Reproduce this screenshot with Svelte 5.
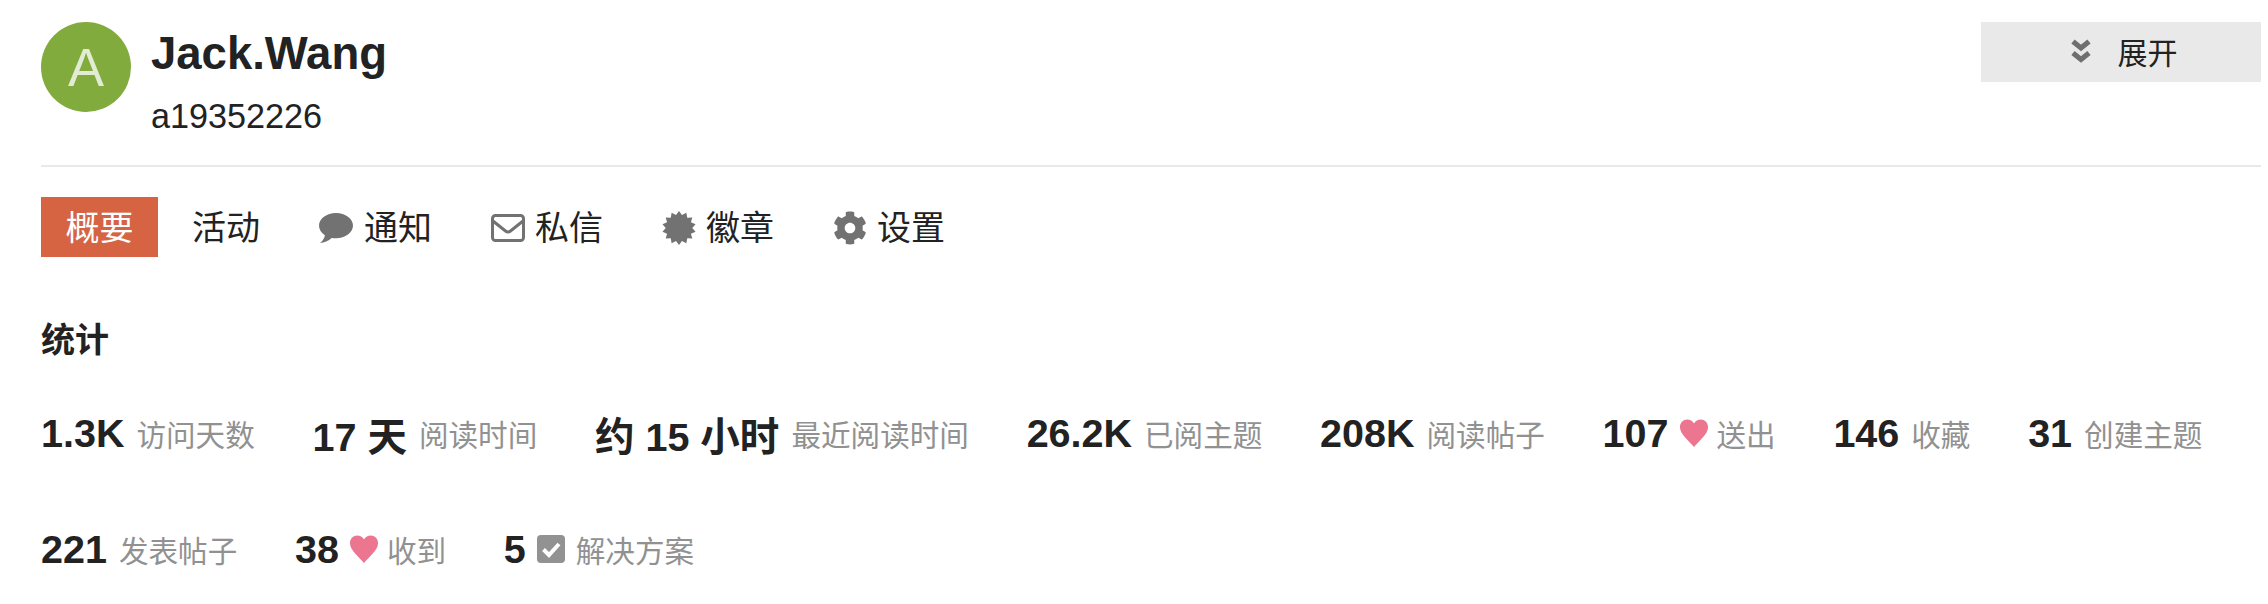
<script>
	// burst outline for the badge icon
	const burst = Array.from({ length: 28 }, (_, i) => {
		const r = i % 2 ? 39 : 50;
		const a = (i * Math.PI) / 14;
		return `${(50 + r * Math.sin(a)).toFixed(1)},${(50 - r * Math.cos(a)).toFixed(1)}`;
	}).join(' ');

	const gearPath =
		'M487.4 315.7l-42.6-24.6c4.3-23.2 4.3-47 0-70.2l42.6-24.6c4.9-2.8 7.1-8.6 5.5-14-11.1-35.6-30-67.8-54.7-94.6-3.8-4.1-10-5.1-14.8-2.3L380.8 110c-17.9-15.4-38.5-27.3-60.8-35.1V25.8c0-5.6-3.9-10.5-9.4-11.7-36.7-8.2-74.3-7.8-109.2 0-5.5 1.2-9.4 6.1-9.4 11.7V75c-22.2 7.9-42.8 19.8-60.8 35.1L88.7 85.5c-4.9-2.8-11-1.9-14.8 2.3-24.7 26.7-43.6 58.9-54.7 94.6-1.7 5.4.6 11.2 5.5 14L67.3 221c-4.3 23.2-4.3 47 0 70.2l-42.6 24.6c-4.9 2.8-7.1 8.6-5.5 14 11.1 35.6 30 67.8 54.7 94.6 3.8 4.1 10 5.1 14.8 2.3l42.6-24.6c17.9 15.4 38.5 27.3 60.8 35.1v49.2c0 5.6 3.9 10.5 9.4 11.7 36.7 8.2 74.3 7.8 109.2 0 5.5-1.2 9.4-6.1 9.4-11.7v-49.2c22.2-7.9 42.8-19.8 60.8-35.1l42.6 24.6c4.9 2.8 11 1.9 14.8-2.3 24.7-26.7 43.6-58.9 54.7-94.6 1.5-5.5-.7-11.3-5.6-14.1zM256 336c-44.1 0-80-35.9-80-80s35.9-80 80-80 80 35.9 80 80-35.9 80-80 80z';

	const stats = [
		{ value: '1.3K', label: '访问天数' },
		{ value: '17 天', label: '阅读时间' },
		{ value: '约 15 小时', label: '最近阅读时间' },
		{ value: '26.2K', label: '已阅主题' },
		{ value: '208K', label: '阅读帖子' },
		{ value: '107', label: '送出', icon: 'heart' },
		{ value: '146', label: '收藏' },
		{ value: '31', label: '创建主题' },
		{ value: '221', label: '发表帖子' },
		{ value: '38', label: '收到', icon: 'heart' },
		{ value: '5', label: '解决方案', icon: 'check' }
	];
</script>

<div class="page">
	<header class="head">
		<div class="avatar">A</div>
		<div class="who">
			<div class="name">Jack.Wang</div>
			<div class="handle">a19352226</div>
		</div>
		<button type="button" class="expand">
			<svg class="chev" viewBox="0 0 20 25" aria-hidden="true">
				<path d="M2 2.500l8 6.500 8-6.500M2 14l8 6.500 8-6.500" fill="none" stroke="#6f6f6f" stroke-width="5.200" />
			</svg>
			<span>展开</span>
		</button>
	</header>

	<nav class="tabs">
		<a class="tab active" href="#top">概要</a>
		<a class="tab plain" href="#top">活动</a>
		<a class="tab" href="#top">
			<svg class="ico chat" viewBox="0 0 34 32" aria-hidden="true">
				<path d="M17 1C7.600 1 0 6.600 0 13.600c0 3.900 2.200 7.300 5.900 9.600C5.500 26 4 28.600 1 31c4.300-.3 8.500-2.100 11.700-5.100 1.400.3 2.800.4 4.300.4 9.400 0 17-5.700 17-12.700S26.400 1 17 1z" fill="#727272" />
			</svg>
			通知
		</a>
		<a class="tab" href="#top">
			<svg class="ico" viewBox="0 0 34 28" aria-hidden="true">
				<rect x="1.500" y="1.500" width="31" height="25" rx="3" fill="none" stroke="#727272" stroke-width="3" />
				<path d="M2 7l12.500 10c1.500 1.200 3.500 1.200 5 0L32 7" fill="none" stroke="#727272" stroke-width="3" />
			</svg>
			私信
		</a>
		<a class="tab" href="#top">
			<svg class="ico" viewBox="0 0 100 100" aria-hidden="true">
				<polygon points={burst} fill="#727272" />
			</svg>
			徽章
		</a>
		<a class="tab" href="#top">
			<svg class="ico" viewBox="0 0 512 512" aria-hidden="true">
				<path d={gearPath} fill="#727272" />
			</svg>
			设置
		</a>
	</nav>

	<h3 class="title">统计</h3>

	<ul class="stats">
		{#each stats as s}
			<li class="stat">
				<span class="value">{s.value}</span>
				{#if s.icon === 'heart'}
					<svg class="mini" viewBox="0 0 32 32" aria-hidden="true">
						<path d="M16 31C11 24.500 1 17.500 1 9.500 1 4.800 4.600 1.500 8.800 1.500c3 0 5.700 1.600 7.200 4.300 1.500-2.700 4.200-4.300 7.200-4.300 4.200 0 7.800 3.300 7.800 8 0 8-10 15-15 21.500z" fill="#ec7590" />
					</svg>
					<span class="label heart">{s.label}</span>
				{:else if s.icon === 'check'}
					<svg class="mini" viewBox="1 1 30 30" aria-hidden="true">
						<rect x="2" y="2" width="28" height="28" rx="4" fill="#929292" />
						<path d="M8.500 16.500l5.500 5.500 10-11" fill="none" stroke="#fff" stroke-width="4" />
					</svg>
					<span class="label check">{s.label}</span>
				{:else}
					<span class="label">{s.label}</span>
				{/if}
			</li>
		{/each}
	</ul>
</div>

<style>
	:global(body) {
		background: #fff;
	}

	.page {
		padding: 22px 7px 0 41px;
		font-family: 'Liberation Sans', 'Noto Sans CJK SC', sans-serif;
		color: #222;
	}

	.head {
		display: flex;
		align-items: flex-start;
		height: 143px;
		border-bottom: 2px solid #e9e9e9;
	}

	.avatar {
		width: 90px;
		height: 90px;
		border-radius: 50%;
		background: #82ab3e;
		color: #e2ebd3;
		font-size: 54px;
		line-height: 90px;
		text-align: center;
		flex-shrink: 0;
	}

	.who {
		margin-left: 20px;
		flex: 1;
	}

	.name {
		font-size: 45.500px;
		font-weight: 700;
		line-height: 52px;
		margin-top: 6px;
	}

	.handle {
		font-size: 34.200px;
		line-height: 40px;
		margin-top: 16px;
	}

	.expand {
		width: 280px;
		height: 60px;
		border: none;
		background: #e9e9e9;
		color: #222;
		font: inherit;
		font-size: 30px;
		display: flex;
		align-items: center;
		justify-content: center;
		gap: 27px;
		padding: 0 0 2px 6px;
	}

	.chev {
		width: 20px;
		height: 25px;
	}

	.tabs {
		display: flex;
		align-items: center;
		gap: 11px;
		margin-top: 30px;
	}

	.tab {
		display: flex;
		align-items: center;
		gap: 10px;
		height: 60px;
		padding: 0 24px 3px;
		box-sizing: border-box;
		font-size: 34px;
		color: #222;
		text-decoration: none;
	}

	.tab.active {
		padding: 0 24.500px 3px;
		background: #d66443;
		color: #fff;
	}

	.tab.plain {
		padding: 0 25px 3px 23px;
	}

	.ico {
		width: 34px;
		height: 34px;
		margin-top: 5px;
	}

	.ico.chat {
		margin-left: -1px;
		margin-right: 1px;
	}

	.title {
		margin: 60px 0 0;
		font-size: 34px;
		line-height: 46px;
		font-weight: 700;
	}

	.stats {
		list-style: none;
		margin: 47px 0 0;
		padding: 0;
		display: flex;
		flex-wrap: wrap;
		column-gap: 57.700px;
		row-gap: 70px;
	}

	.stat {
		display: flex;
		align-items: center;
		height: 46px;
	}

	.value {
		font-size: 39.500px;
		font-weight: 700;
	}

	.label {
		font-size: 29.600px;
		color: #919191;
		margin-left: 12px;
	}

	.label.heart {
		margin-left: 8px;
	}

	.label.check {
		margin-left: 10px;
	}

	.mini {
		width: 30px;
		height: 30px;
		margin-left: 10px;
	}
</style>
